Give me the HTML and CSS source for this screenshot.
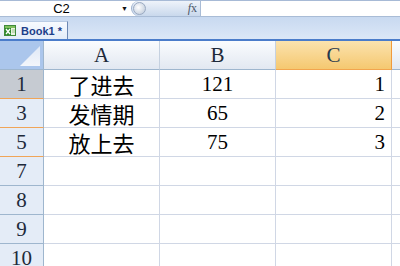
FILE: index.html
```html
<!DOCTYPE html>
<html>

<head>
   <title>Book1</title>
   <link rel="stylesheet" href="styles.css">
</head>

<body>
   <div class="formula-bar">
      <div class="name-box">
         <span class="name">C2</span>
         <span class="drop">&#9660;</span>
      </div>
      <div class="fx-box">
         <span class="grip"></span>
         <span class="fx"><i>f</i>x</span>
      </div>
      <div class="formula"></div>
   </div>

   <div class="tabs">
      <div class="tab">
         <svg class="book-icon" width="12" height="11" viewBox="0 0 12 11">
            <rect x="0.5" y="0.5" width="11" height="10" fill="#e9f3e1" stroke="#3f8a3a"/>
            <rect x="1" y="1" width="10" height="2" fill="#7fbf5d"/>
            <rect x="1" y="3" width="6" height="7" fill="#2f8a2a"/>
            <path d="M2 4 L6 9 M6 4 L2 9" stroke="#fff" stroke-width="1.3"/>
            <path d="M8 5 H11 M8 7 H11" stroke="#8ab87a" stroke-width="0.8"/>
         </svg>
         <span class="tab-title">Book1 *</span>
      </div>
   </div>

   <div class="sheet">
      <div class="corner"></div>
      <div class="col-head">A</div>
      <div class="col-head">B</div>
      <div class="col-head active">C</div>
      <div class="col-head"></div>

      <div class="row-head current hidden-after">1</div>
      <div class="cell center cjk">了进去</div>
      <div class="cell center">121</div>
      <div class="cell right">1</div>
      <div class="cell"></div>

      <div class="row-head hidden-after">3</div>
      <div class="cell center cjk">发情期</div>
      <div class="cell center">65</div>
      <div class="cell right">2</div>
      <div class="cell"></div>

      <div class="row-head hidden-after">5</div>
      <div class="cell center cjk">放上去</div>
      <div class="cell center">75</div>
      <div class="cell right">3</div>
      <div class="cell"></div>

      <div class="row-head">7</div>
      <div class="cell"></div>
      <div class="cell"></div>
      <div class="cell"></div>
      <div class="cell"></div>

      <div class="row-head">8</div>
      <div class="cell"></div>
      <div class="cell"></div>
      <div class="cell"></div>
      <div class="cell"></div>

      <div class="row-head">9</div>
      <div class="cell"></div>
      <div class="cell"></div>
      <div class="cell"></div>
      <div class="cell"></div>

      <div class="row-head">10</div>
      <div class="cell"></div>
      <div class="cell"></div>
      <div class="cell"></div>
      <div class="cell"></div>
   </div>
</body>

</html>
```

FILE: styles.css
```css
body {
   margin: 0;
   width: 400px;
   height: 266px;
   overflow: hidden;
   background-color: #fff;
   font-family: 'Liberation Serif', 'Noto Sans CJK SC', serif;
}

/* name box + formula bar */
.formula-bar {
   display: flex;
   height: 15px;
   border-top: 1px solid #a7bad6;
   border-bottom: 1px solid #a9bcd6;
   background-color: #fff;
}

.name-box {
   width: 131px;
   display: flex;
   align-items: center;
   font-family: 'Liberation Sans', Arial, sans-serif;
   font-size: 13px;
   color: #000;
}

.name {
   flex: 1;
   text-align: center;
   padding-left: 2px;
}

.drop {
   font-size: 7px;
   width: 10px;
   color: #111;
}

.fx-box {
   width: 68px;
   display: flex;
   align-items: center;
   justify-content: space-between;
   background: linear-gradient(#eef3fa, #c9d8ec);
   border-right: 1px solid #a9bcd6;
   border-radius: 8px 0 0 8px;
   border-left: 1px solid #9fb3cf;
}

.grip {
   width: 11px;
   height: 11px;
   margin-left: 1px;
   border-radius: 50%;
   background: radial-gradient(circle at 40% 40%, #fff, #b7c4d6);
   border: 1px solid #9aaac2;
}

.fx {
   font-family: 'Liberation Serif', serif;
   font-size: 12px;
   color: #4a5566;
   margin-right: 3px;
}

.formula {
   flex: 1;
}

/* workbook tab strip */
.tabs {
   height: 22px;
   display: flex;
   align-items: flex-end;
   background: linear-gradient(#c8d9f0, #dbe7f7);
   border-bottom: 2px solid #4a7cca;
}

.tab {
   width: 68px;
   height: 18px;
   display: flex;
   align-items: center;
   gap: 5px;
   padding-left: 4px;
   box-sizing: border-box;
   background: linear-gradient(#f7faff, #e3ecf8);
   border-right: 1px solid #6d88b3;
   border-top: 1px solid #b9cbe4;
}

.tab-title {
   font-family: 'Liberation Sans', Arial, sans-serif;
   font-size: 11px;
   font-weight: bold;
   color: #1d3f8a;
}

/* the sheet grid */
.sheet {
   display: grid;
   grid-template-columns: 44px 116px 116px 116px 1fr;
   grid-template-rows: 29px repeat(7, 29px);
   font-size: 21px;
   color: #000;
}

.corner {
   position: relative;
   background-color: #abc6ec;
   border-right: 1px solid #9eb6ce;
   border-bottom: 1px solid #9eb6ce;
}

.corner::after {
   content: '';
   position: absolute;
   right: 3px;
   bottom: 3px;
   width: 20px;
   height: 20px;
   background: linear-gradient(#dfe8f6, #f3f6fb);
   clip-path: polygon(100% 0, 100% 100%, 0 100%);
}

.col-head {
   display: flex;
   align-items: center;
   justify-content: center;
   background: linear-gradient(#fafcfe, #e2e8f1);
   border-right: 1px solid #c5d1e0;
   border-bottom: 1px solid #9eb6ce;
   color: #1e2a3a;
   padding-top: 1px;
}

.col-head.active {
   background: linear-gradient(#fbe3ae, #f5c870);
   border-right: 1px solid #f09a3c;
   border-bottom: 1px solid #f2a54e;
   color: #27394d;
}

.row-head {
   display: flex;
   align-items: center;
   justify-content: center;
   background-color: #e4ecf7;
   border-right: 1px solid #9eb6ce;
   border-bottom: 1px solid #9eb6ce;
   color: #1e2a3a;
}

.row-head.current {
   background-color: #c6cbd2;
}

.row-head.hidden-after {
   border-bottom: 1px solid #f0a558;
}

.cell {
   display: flex;
   align-items: center;
   padding: 0 6px;
   border-right: 1px solid #d0d7e5;
   border-bottom: 1px solid #d0d7e5;
}

.cell.cjk {
   font-size: 22px;
}

.cell.center {
   justify-content: center;
}

.cell.right {
   justify-content: flex-end;
}
```
